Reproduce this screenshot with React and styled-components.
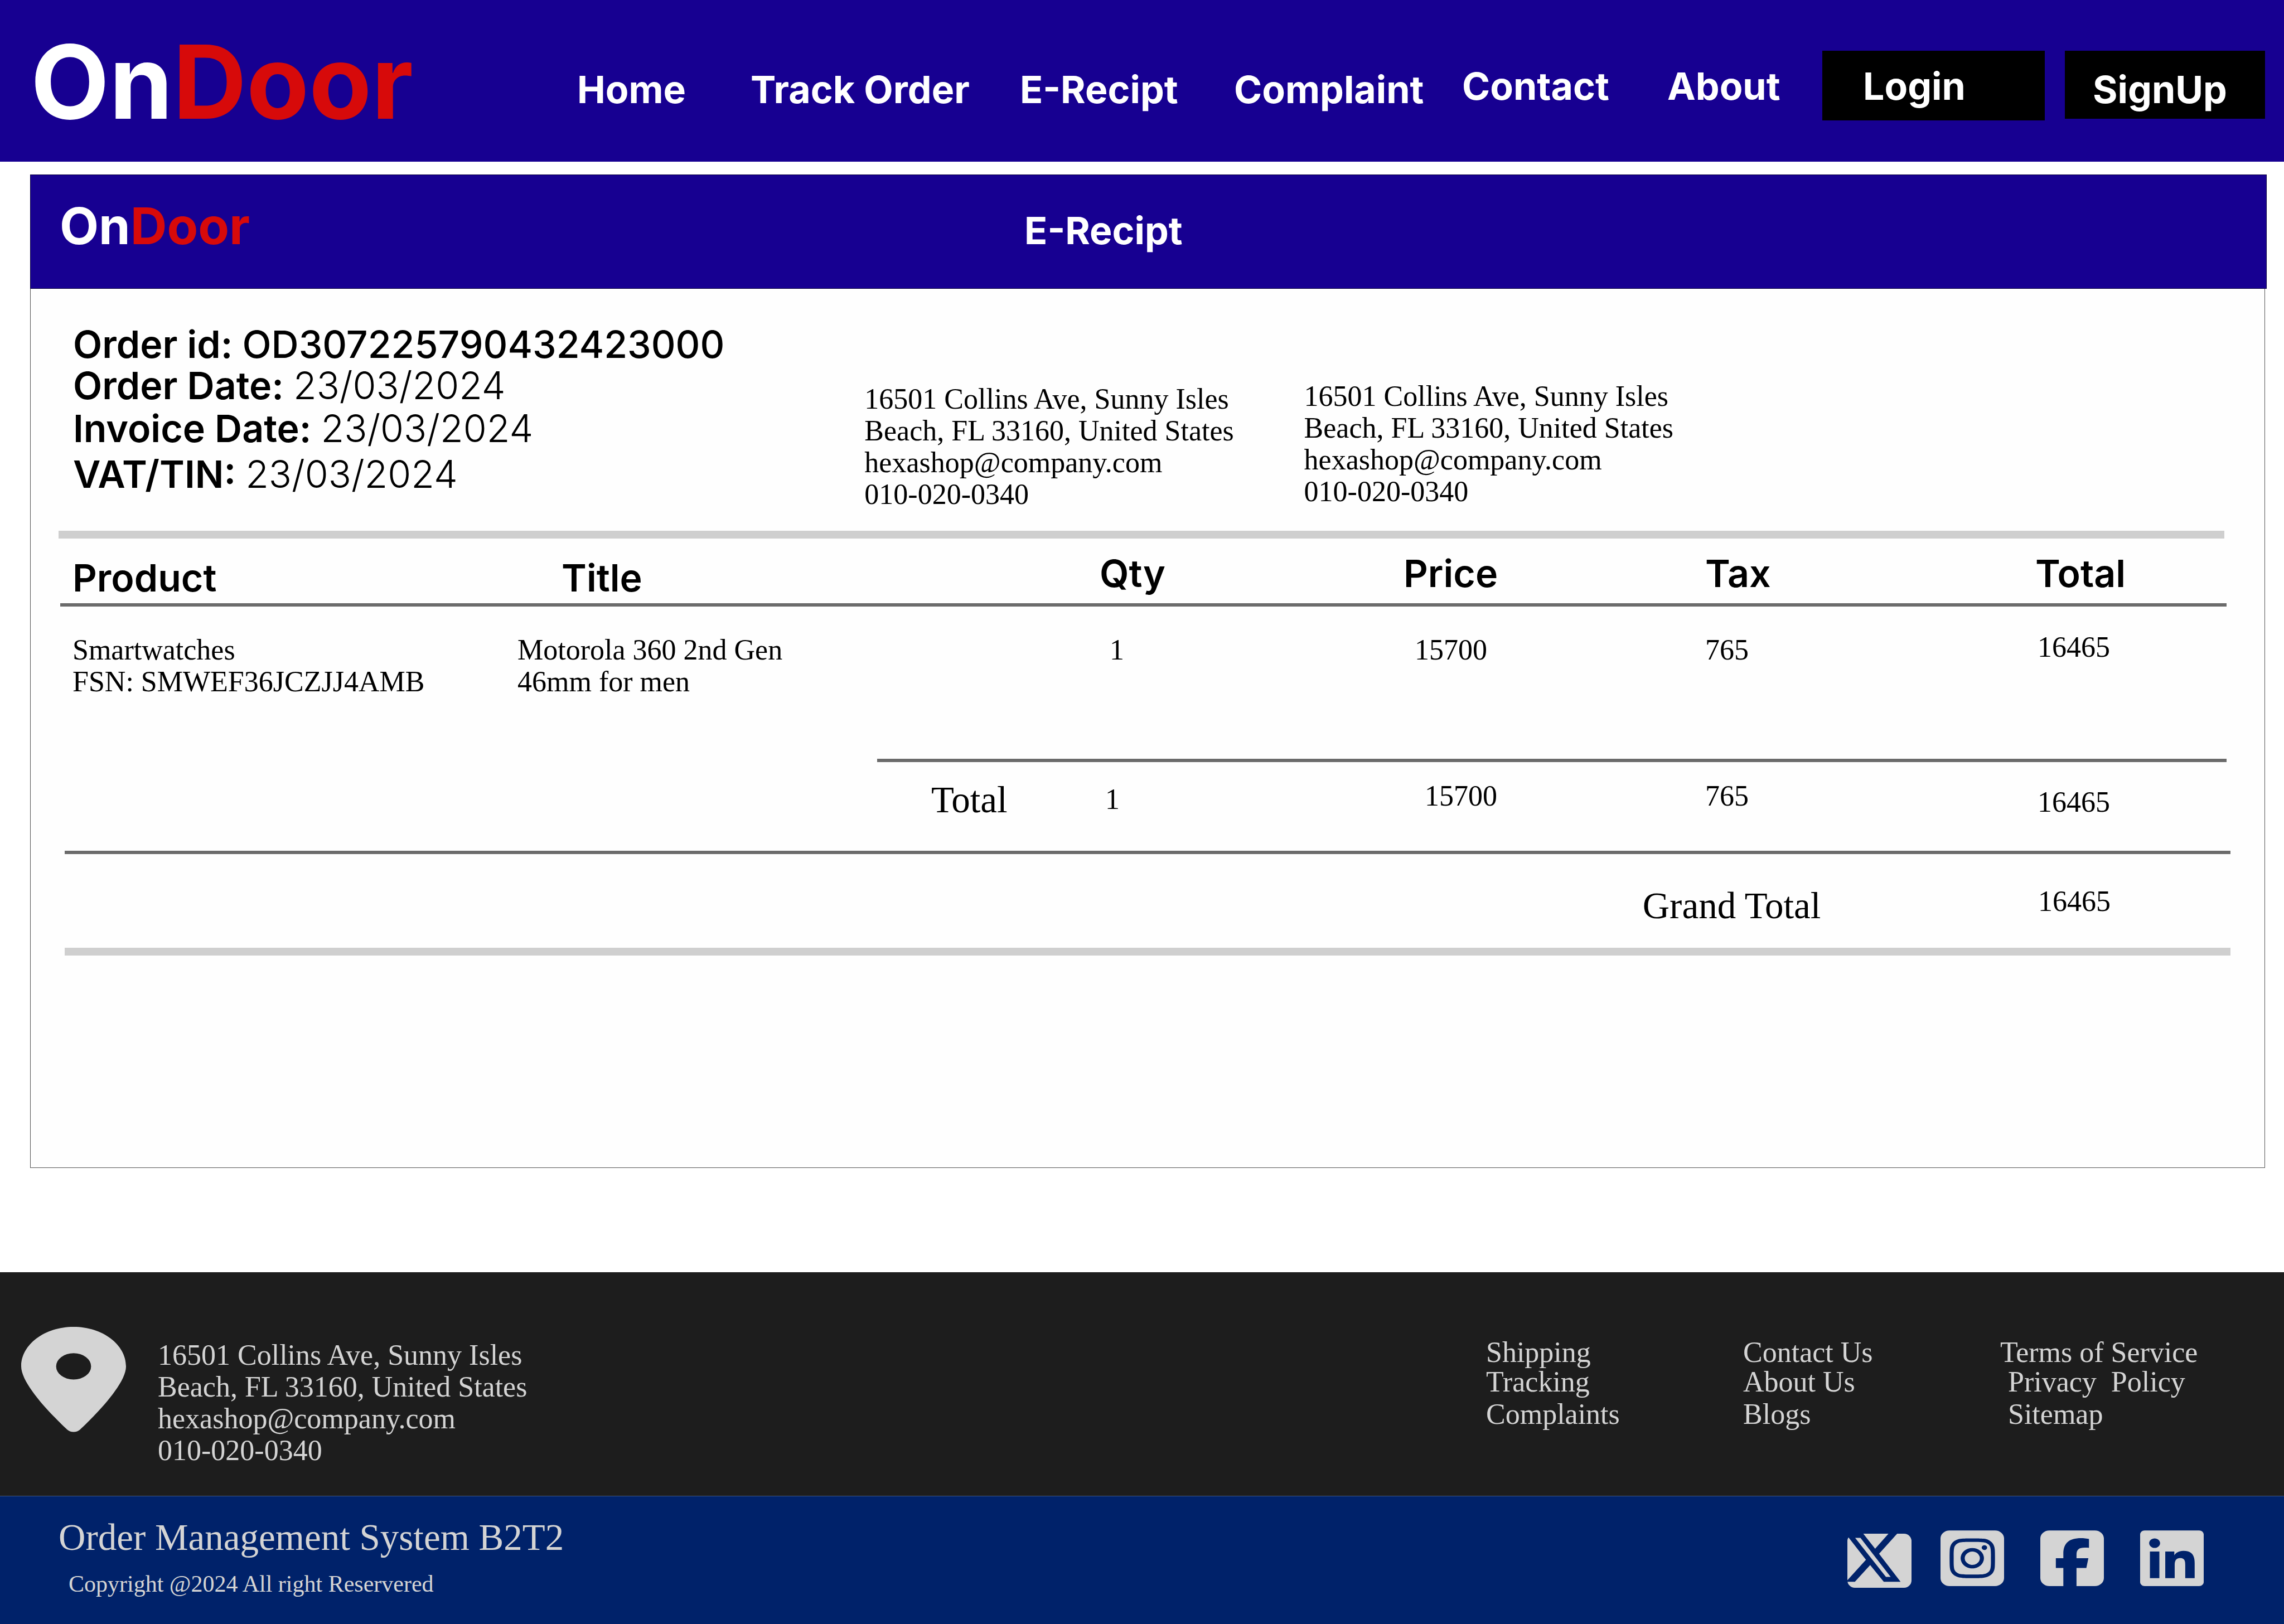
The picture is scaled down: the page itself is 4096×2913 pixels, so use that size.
import React from "react";
import styled, { createGlobalStyle, css } from "styled-components";
import {
  FaLinkedin,
  FaLocationDot,
  FaSquareFacebook,
  FaSquareInstagram,
} from "react-icons/fa6";

const color = {
  brand: "#170091",
  accent: "#d70a0a",
  dark: "#1d1d1d",
  navy: "#00226a",
  light: "#d4d4d4",
  rule: "#6b6b6b",
  softRule: "#cfcfcf",
};

const sans = `Inter, "Liberation Sans", sans-serif`;
const serif = `"Liberation Serif", "Times New Roman", serif`;

const GlobalStyle = createGlobalStyle`
  *, *::before, *::after { box-sizing: border-box; }
  body { margin: 0; background: #fff; color: #000; }
  h1, p, dl, dd, ul, address { margin: 0; padding: 0; font-style: normal; }
  ul { list-style: none; }
  a { color: inherit; text-decoration: none; }
`;

const heading = css`
  font-family: ${sans};
  font-size: 68px;
  line-height: 82px;
  font-weight: 600;
`;

const boldHeading = css`
  ${heading}
  font-weight: 700;
`;

const bodyText = css`
  font-family: ${serif};
  font-size: 52px;
  line-height: 57px;
  font-weight: 400;
`;

const titleText = css`
  font-family: ${serif};
  font-size: 67px;
  line-height: 73px;
  font-weight: 400;
`;

/* ---------- top bar ---------- */

const TopBar = styled.header`
  display: grid;
  grid-template-columns:
    minmax(0, 1035fr) minmax(0, 1587fr) minmax(0, 646fr)
    minmax(0, 828fr);
  align-items: start;
  height: 290px;
  background: ${color.brand};
  color: #fff;
  white-space: nowrap;
`;

const Logo = styled.a`
  font-family: ${sans};
  font-weight: 700;
  font-size: ${(p) => (p.$large ? 183 : 91)}px;
  line-height: ${(p) => (p.$large ? 220 : 110)}px;
  padding: ${(p) => (p.$large ? "37px 0 0 55px" : "0 0 0 52px")};
  color: #fff;

  span {
    color: ${color.accent};
  }
`;

const Nav = styled.nav`
  display: grid;
  grid-template-columns: ${(p) => p.$columns};
  padding-top: ${(p) => p.$top}px;
`;

const NavLink = styled.a`
  ${boldHeading}
`;

const Actions = styled.div`
  display: grid;
  grid-template-columns: minmax(0, 399fr) minmax(0, 359fr);
  align-items: start;
  gap: 36px;
  padding: 91px 34px 0 0;
`;

const ActionButton = styled.button`
  ${boldHeading}
  border: 0;
  background: #000;
  color: #fff;
  text-align: left;
  cursor: pointer;
  padding: ${(p) => p.$padding};
`;

/* ---------- receipt card ---------- */

const Card = styled.main`
  margin: 23px 34px 187px 54px;
  border: 1px solid #555;
  border-top: 0;
  background: #fefefe;
  padding-bottom: 380px;
`;

const CardHeader = styled.div`
  display: grid;
  grid-template-columns: minmax(0, 1783fr) minmax(0, 2228fr);
  align-items: baseline;
  height: 205px;
  margin: 0 -4px 0 -1px;
  padding-top: 36px;
  border: 1px solid #0b0340;
  background: ${color.brand};
  color: #fff;
`;

const CardTitle = styled.h1`
  ${boldHeading}
`;

const OrderSummary = styled.section`
  display: grid;
  grid-template-columns: minmax(0, 1445fr) minmax(0, 788fr) minmax(0, 1650fr);
  align-items: start;
  height: 448px;
  margin: 0 72px 0 50px;
  border-bottom: 14px solid ${color.softRule};
`;

const OrderFacts = styled.dl`
  ${heading}
  line-height: 74px;
  display: grid;
  grid-template-rows: 74px 77px 82px 74px;
  padding: 62px 0 0 26px;
  white-space: nowrap;
`;

const Fact = styled.div`
  display: flex;
  gap: 17px;
`;

const FactValue = styled.dd`
  font-weight: ${(p) => (p.$strong ? 500 : 300)};
`;

const AddressBlock = styled.address`
  ${bodyText}
  padding-top: ${(p) => p.$top}px;
  white-space: pre-line;
`;

/* ---------- items table ---------- */

const Items = styled.table`
  table-layout: fixed;
  width: calc(100% - 122px);
  margin: 0 69px 0 53px;
  border-collapse: separate;
  border-spacing: 0;
`;

const Col = styled.col`
  width: ${(p) => p.$w}px;
`;

const HeadCell = styled.th`
  ${heading}
  height: 122px;
  padding: 21px 0 5px ${(p) => p.$inset || 0}px;
  border-bottom: 6px solid ${color.rule};
  text-align: left;
  vertical-align: ${(p) => p.$align || "top"};
`;

const Cell = styled.td`
  ${bodyText}
  height: 273px;
  padding: 49px 0 0 ${(p) => p.$inset || 0}px;
  vertical-align: top;
  white-space: pre-line;
`;

const AmountCell = styled(Cell)`
  padding-top: 44px;
`;

const SumCell = styled.td`
  ${bodyText}
  height: 165px;
  padding: 32px 0 59px ${(p) => p.$inset || 0}px;
  border-top: 6px solid ${color.rule};
  vertical-align: ${(p) => p.$align || "top"};
`;

const SumLabel = styled.th`
  ${titleText}
  padding: 31px 0 0 97px;
  border-top: 6px solid ${color.rule};
  text-align: left;
  vertical-align: top;
`;

const GrandTotal = styled.dl`
  display: grid;
  grid-template-columns: minmax(0, 2829fr) minmax(0, 709fr) minmax(0, 345fr);
  height: 188px;
  margin: 0 61px;
  padding-top: 56px;
  border-top: 6px solid ${color.rule};
  border-bottom: 14px solid ${color.softRule};
`;

const GrandLabel = styled.dt`
  ${titleText}
  grid-column: 2;
`;

const GrandValue = styled.dd`
  ${bodyText}
`;

/* ---------- footer ---------- */

const FooterMain = styled.div`
  ${bodyText}
  display: grid;
  grid-template-columns: minmax(0, 283fr) minmax(0, 2382fr) minmax(0, 461fr) minmax(0, 461fr) minmax(0, 509fr);
  align-items: start;
  height: 401px;
  background: ${color.dark};
  color: ${color.light};
`;

const PinIcon = styled(FaLocationDot)`
  width: 188px;
  height: 189px;
  margin: 98px 0 0 38px;
`;

const FooterLinks = styled.ul`
  display: grid;
  grid-template-rows: 53px 58px 57px;
  padding-top: 115px;
  white-space: pre;

  li + li {
    padding-left: ${(p) => p.$indent || 0}px;
  }
`;

const FooterBottom = styled.div`
  display: flex;
  justify-content: space-between;
  align-items: start;
  height: 230px;
  padding: 0 144px 0 105px;
  border-top: 1px solid #44587c;
  background: ${color.navy};
  color: ${color.light};
`;

const FooterTitle = styled.p`
  ${titleText}
  padding-top: 37px;
`;

const Copyright = styled.p`
  font-family: ${serif};
  font-size: 42px;
  line-height: 48px;
  padding: 23px 0 0 18px;
`;

const SocialRow = styled.div`
  display: flex;
  align-items: start;
  gap: ${(p) => p.$gap}px;
  padding-top: ${(p) => p.$top || 0}px;
  color: ${color.light};
`;

const SocialLink = styled.a`
  display: block;

  svg {
    display: block;
    width: 114px;
    height: 114px;
  }
`;

const XLink = styled.a`
  display: block;
  padding-top: 13px;

  svg {
    display: block;
    width: 115px;
    height: 97px;
  }
`;

function XIcon() {
  return (
    <svg viewBox="69 90 504 425" preserveAspectRatio="none" aria-hidden="true">
      <rect x="69" y="90" width="504" height="425" rx="58" fill={color.light} />
      <path
        fill={color.navy}
        d="M69 90H194L287 208L392 90H460L318 248L487 468H355L248 336L128 468H69V456L215 295L79 121H69Z"
      />
      <path fill={color.light} d="M130 123H172L409 430H372Z" />
    </svg>
  );
}

const ADDRESS = `16501 Collins Ave, Sunny Isles
Beach, FL 33160, United States
hexashop@company.com
010-020-0340`;

const footerColumns = [
  { links: ["Shipping", "Tracking", "Complaints"] },
  { links: ["Contact Us", "About Us", "Blogs"] },
  { links: ["Terms of Service", "Privacy  Policy", "Sitemap"], indent: 14 },
];

const orderDates = [
  ["Order Date:", "23/03/2024"],
  ["Invoice Date:", "23/03/2024"],
  ["VAT/TIN:", "23/03/2024"],
];

const columnWidths = [820, 645, 399, 545, 541, 592, 343];

export default function App() {
  return (
    <>
      <GlobalStyle />
      <TopBar>
        <Logo href="#" $large>
          On<span>Door</span>
        </Logo>
        <Nav $top={119} $columns="311fr 483fr 384fr 409fr" aria-label="Main">
          <NavLink href="#home">Home</NavLink>
          <NavLink href="#track">Track Order</NavLink>
          <NavLink href="#receipt">E-Recipt</NavLink>
          <NavLink href="#complaint">Complaint</NavLink>
        </Nav>
        <Nav $top={113} $columns="368fr 278fr" aria-label="Company">
          <NavLink href="#contact">Contact</NavLink>
          <NavLink href="#about">About</NavLink>
        </Nav>
        <Actions>
          <ActionButton type="button" $padding="22px 0 21px 73px">
            Login
          </ActionButton>
          <ActionButton type="button" $padding="28px 0 12px 50px">
            SignUp
          </ActionButton>
        </Actions>
      </TopBar>

      <Card>
        <CardHeader>
          <Logo href="#">
            On<span>Door</span>
          </Logo>
          <CardTitle>E-Recipt</CardTitle>
        </CardHeader>

        <OrderSummary>
          <OrderFacts>
            <Fact>
              <dt>Order id:</dt>
              <FactValue $strong>OD307225790432423000</FactValue>
            </Fact>
            {orderDates.map(([label, value]) => (
              <Fact key={label}>
                <dt>{label}</dt>
                <FactValue>{value}</FactValue>
              </Fact>
            ))}
          </OrderFacts>
          <AddressBlock $top={169}>{ADDRESS}</AddressBlock>
          <AddressBlock $top={164}>{ADDRESS}</AddressBlock>
        </OrderSummary>

        <Items>
          <colgroup>
            {columnWidths.map((w, i) => (
              <Col key={i} $w={w} />
            ))}
          </colgroup>
          <thead>
            <tr>
              <HeadCell scope="col" $align="bottom" $inset={22}>
                Product
              </HeadCell>
              <HeadCell scope="col" $align="bottom" $inset={79} colSpan={2}>
                Title
              </HeadCell>
              <HeadCell scope="col">Qty</HeadCell>
              <HeadCell scope="col">Price</HeadCell>
              <HeadCell scope="col">Tax</HeadCell>
              <HeadCell scope="col">Total</HeadCell>
            </tr>
          </thead>
          <tbody>
            <tr>
              <Cell $inset={22}>{"Smartwatches\nFSN: SMWEF36JCZJJ4AMB"}</Cell>
              <Cell colSpan={2}>{"Motorola 360 2nd Gen\n46mm for men"}</Cell>
              <Cell $inset={18}>1</Cell>
              <Cell $inset={20}>15700</Cell>
              <Cell>765</Cell>
              <AmountCell $inset={4}>16465</AmountCell>
            </tr>
          </tbody>
          <tfoot>
            <tr>
              <td colSpan={2} />
              <SumLabel scope="row">Total</SumLabel>
              <SumCell $align="middle" $inset={10}>
                1
              </SumCell>
              <SumCell $inset={38}>15700</SumCell>
              <SumCell>765</SumCell>
              <SumCell $align="bottom" $inset={4}>
                16465
              </SumCell>
            </tr>
          </tfoot>
        </Items>

        <GrandTotal>
          <GrandLabel>Grand Total</GrandLabel>
          <GrandValue>16465</GrandValue>
        </GrandTotal>
      </Card>

      <footer>
        <FooterMain>
          <PinIcon preserveAspectRatio="none" aria-hidden="true" />
          <AddressBlock $top={120}>{ADDRESS}</AddressBlock>
          {footerColumns.map(({ links, indent }) => (
            <FooterLinks key={links[0]} $indent={indent}>
              {links.map((text) => (
                <li key={text}>
                  <a href="#">{text}</a>
                </li>
              ))}
            </FooterLinks>
          ))}
        </FooterMain>
        <FooterBottom>
          <div>
            <FooterTitle>Order Management System B2T2</FooterTitle>
            <Copyright>Copyright @2024 All right Reservered</Copyright>
          </div>
          <SocialRow $gap={52} $top={54}>
            <XLink href="#" aria-label="X">
              <XIcon />
            </XLink>
            <SocialRow $gap={65}>
              <SocialLink href="#" aria-label="Instagram">
                <FaSquareInstagram preserveAspectRatio="none" />
              </SocialLink>
              <SocialLink href="#" aria-label="Facebook">
                <FaSquareFacebook preserveAspectRatio="none" />
              </SocialLink>
              <SocialLink href="#" aria-label="LinkedIn">
                <FaLinkedin preserveAspectRatio="none" />
              </SocialLink>
            </SocialRow>
          </SocialRow>
        </FooterBottom>
      </footer>
    </>
  );
}
